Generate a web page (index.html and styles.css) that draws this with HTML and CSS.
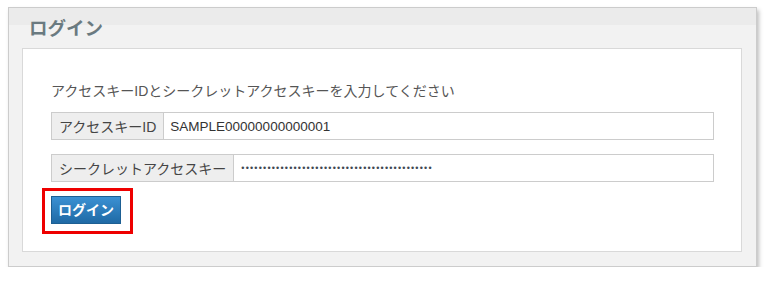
FILE: index.html
```html
<!DOCTYPE html>
<html lang="ja">
<head>
<meta charset="utf-8">
<title>ログイン</title>
<link rel="stylesheet" href="styles.css">
</head>
<body>
<section class="panel">
  <h1 class="panel-title">ログイン</h1>
  <div class="panel-body">
    <p class="intro">アクセスキーIDとシークレットアクセスキーを入力してください</p>
    <div class="field">
      <span class="field-label">アクセスキーID</span>
      <span class="field-value">SAMPLE00000000000001</span>
    </div>
    <div class="field">
      <span class="field-label">シークレットアクセスキー</span>
      <span class="field-value secret">••••••••••••••••••••••••••••••••••••••••••••</span>
    </div>
    <div class="actions">
      <button class="btn-login" type="button">ログイン</button>
      <span class="highlight"></span>
    </div>
  </div>
</section>
</body>
</html>
```
FILE: styles.css
```css
* { box-sizing: border-box; }
html, body { margin: 0; padding: 0; background: #fff; }
body {
  font-family: "Liberation Sans", "Noto Sans CJK JP", sans-serif;
  color: #444;
}
.panel {
  margin: 7px 0 0 8px;
  width: 749px;
  border: 1px solid #cccccc;
  background: linear-gradient(#ebebeb 0, #ebebeb 17px, #f2f2f2 17px);
  box-shadow: 2px 3px 4px rgba(0,0,0,0.25);
  padding: 0 14px 14px 13px;
}
.panel-title {
  margin: 9px 0 7px 7px;
  font-size: 18.5px;
  line-height: 24px;
  font-weight: bold;
  color: #6a7a80;
}
.panel-body {
  background: #fff;
  border: 1px solid #d9d9d9;
  padding: 32px 27px 27px 28px;
  display: flex;
  flex-direction: column;
  gap: 14px;
}
.intro {
  margin: 0 0 -3px;
  font-size: 14px;
  line-height: 20px;
  color: #555;
}
.field {
  display: flex;
  height: 28px;
  border: 1px solid #cccccc;
}
.field-label {
  display: flex;
  align-items: center;
  padding: 0 7px;
  background: #eeeeee;
  border-right: 1px solid #cccccc;
  font-size: 14px;
  color: #444;
  white-space: nowrap;
}
.field-value {
  display: flex;
  align-items: center;
  padding: 0 6px;
  font-size: 13.5px;
  color: #333;
  flex: 1;
}
.field-value.secret {
  padding-left: 7px;
  font-size: 9px;
  letter-spacing: 1.2px;
  color: #3e4852;
}
.actions {
  position: relative;
  align-self: flex-start;
}
.btn-login {
  display: block;
  height: 28px;
  padding: 0 6px;
  border: 1px solid #1d5f93;
  background: linear-gradient(#3b91d3, #1f6aa5);
  color: #fff;
  font-family: "Liberation Sans", "Noto Sans CJK JP", sans-serif;
  font-size: 14px;
  font-weight: bold;
  line-height: 26px;
  width: 70px;
}
.highlight {
  position: absolute;
  left: -9px;
  top: -8px;
  width: 91px;
  height: 46px;
  border: 3px solid #ee0000;
}
```
